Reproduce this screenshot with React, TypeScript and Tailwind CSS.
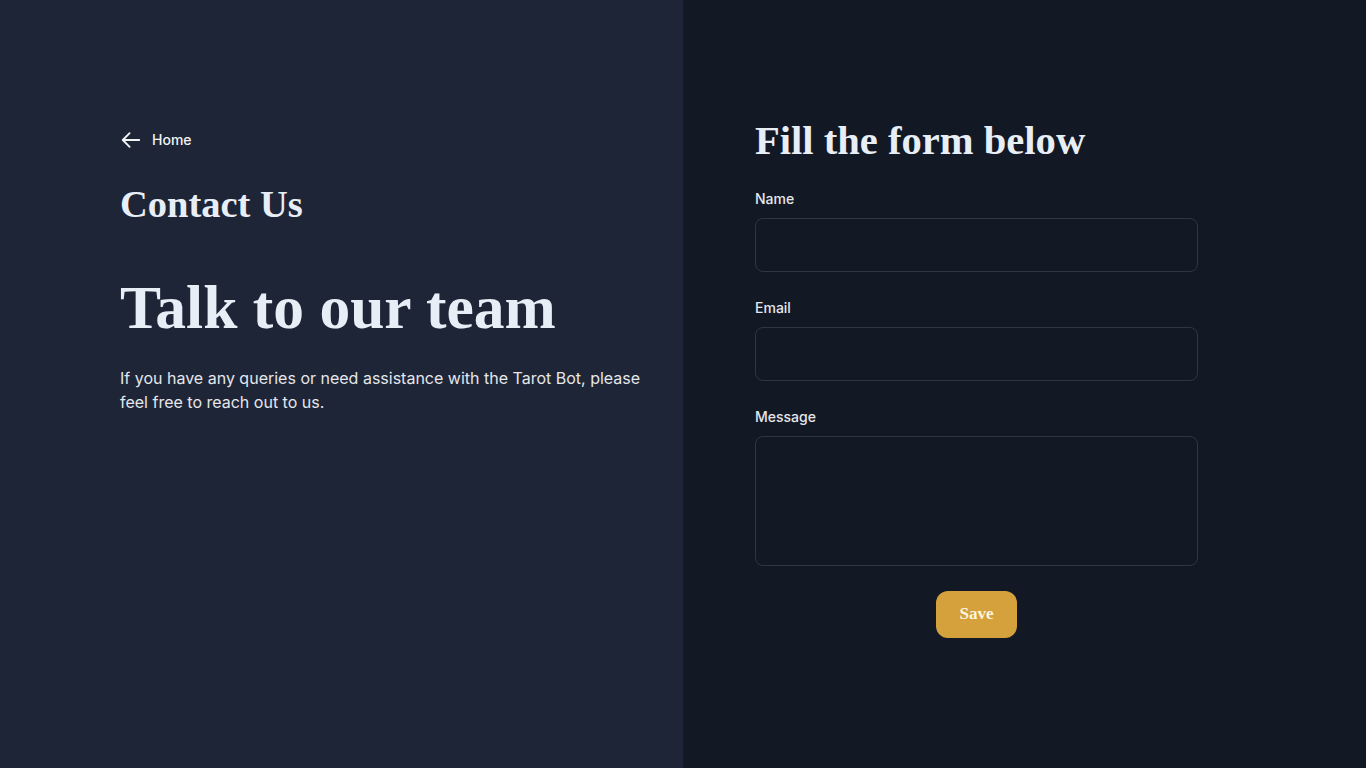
const serif = { fontFamily: '"Liberation Serif", "DejaVu Serif", serif' }

function Field({ label, tall }: { label: string; tall?: boolean }) {
  return (
    <div className="flex flex-col">
      <label className="text-sm font-medium leading-5 text-gray-200">{label}</label>
      {tall ? (
        <textarea className="mt-[9px] h-[130px] w-[443px] resize-none rounded-lg border border-[#2e3545] bg-transparent px-3 py-2 text-gray-100 outline-none" />
      ) : (
        <input
          type="text"
          className="mt-[9px] h-[54px] w-[443px] rounded-lg border border-[#2e3545] bg-transparent px-3 text-gray-100 outline-none"
        />
      )}
    </div>
  )
}

export default function App() {
  return (
    <div
      className="flex min-h-[768px] w-full text-gray-100"
      style={{ fontFamily: 'Inter, "Liberation Sans", sans-serif' }}
    >
      {/* Left side */}
      <div className="w-[683px] shrink-0 bg-[#1e2536] pl-[120px] pt-[129px]">
        <a href="#" className="flex items-center gap-2.5 text-sm font-medium leading-5 text-gray-100">
          <svg width="22" height="22" viewBox="0 0 24 24" fill="none" stroke="currentColor" strokeWidth="2" strokeLinecap="round" strokeLinejoin="round">
            <path d="M10.5 19.5L3 12l7.5-7.5M3 12h18" />
          </svg>
          Home
        </a>
        <h2 className="mt-[30px] text-[38.5px] font-bold leading-[1.2] text-[#e8eef6]" style={serif}>
          Contact Us
        </h2>
        <h1 className="mt-[50px] text-[61.5px] font-bold leading-none text-[#e8eef6]" style={serif}>
          Talk to our team
        </h1>
        <p className="mt-[27px] w-[530px] text-base leading-6 text-gray-200">
          If you have any queries or need assistance with the Tarot Bot, please feel free to reach out to us.
        </p>
      </div>

      {/* Right side */}
      <div className="flex-1 bg-[#131825] pl-[72px] pt-[117px]">
        <h2 className="text-[40.6px] font-bold leading-[1.2] text-[#e8eef6]" style={serif}>
          Fill the form below
        </h2>
        <form className="mt-[23px] flex w-[443px] flex-col gap-[26px]" onSubmit={(e) => e.preventDefault()}>
          <Field label="Name" />
          <Field label="Email" />
          <Field label="Message" tall />
        </form>
        <div className="mt-[25px] flex w-[443px] justify-center">
          <button
            type="button"
            className="h-[47px] w-[81px] rounded-xl bg-[#d4a13d] text-[17px] font-bold text-[#fdf5de]"
            style={serif}
          >
            Save
          </button>
        </div>
      </div>
    </div>
  )
}
